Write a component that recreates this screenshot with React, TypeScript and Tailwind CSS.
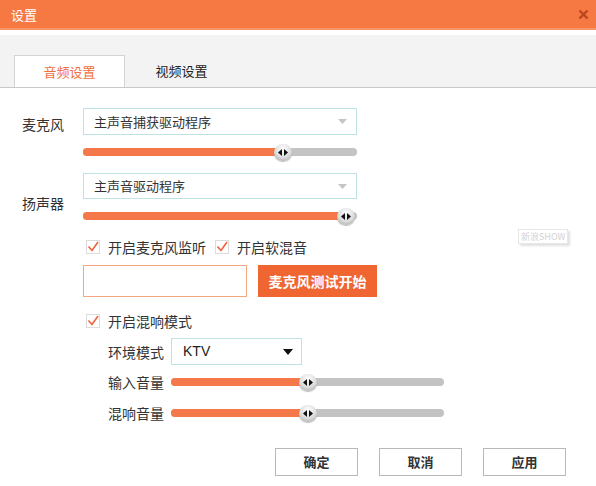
import React from "react";

const Thumb = () => (
  <div className="absolute top-[1px] w-[18px] h-[17px] -ml-[9px] rounded-full bg-[radial-gradient(circle_at_50%_30%,#ffffff,#dcdcdc_55%,#9c9c9c)] shadow-[0_1px_1px_rgba(0,0,0,0.25)] flex items-center justify-center">
    <svg width="10" height="7" viewBox="0 0 10 7">
      <polygon points="4,0 4,7 0,3.5" fill="#111" />
      <polygon points="6,0 6,7 10,3.5" fill="#111" />
    </svg>
  </div>
);

const Slider = ({ width, value }: { width: string; value: number }) => (
  <div className={`relative h-[18px] ${width}`}>
    <div className="absolute left-0 right-0 top-[5px] h-[8px] rounded-full bg-[#c3c3c3]" />
    <div
      className="absolute left-0 top-[5px] h-[8px] rounded-full bg-[#f5784a]"
      style={{ width: `${value}%` }}
    />
    <div className="absolute inset-0" style={{ left: `${value}%` }}>
      <Thumb />
    </div>
  </div>
);

const Select = ({ text, h }: { text: string; h: string }) => (
  <div className={`w-[274px] ${h} border border-[#bfe2e4] bg-white flex items-center justify-between pl-[10px] pr-[9px] text-[13px]`}>
    <span>{text}</span>
    <svg width="9" height="5" viewBox="0 0 9 5">
      <polygon points="0,0 9,0 4.5,5" fill="#c4c4c4" />
    </svg>
  </div>
);

const Check = ({ label }: { label: string }) => (
  <div className="flex items-center">
    <svg width="14" height="14" viewBox="0 0 14 14">
      <rect x="0.5" y="0.5" width="13" height="13" fill="white" stroke="#dcdcdc" />
      <polyline points="2.5,6.5 6,10.5 12,2" fill="none" stroke="#ee6540" strokeWidth="1.6" />
    </svg>
    <span className="ml-[8px] text-[14px] leading-[20px]">{label}</span>
  </div>
);

const Button = ({ label }: { label: string }) => (
  <div className="w-[83px] h-[28px] border border-[#b8b8b8] bg-white flex items-center justify-center text-[13px] font-bold text-[#333]">
    {label}
  </div>
);

export default function App() {
  return (
    <div className="relative w-[596px] h-[486px] bg-white text-[#333] overflow-hidden font-['Noto_Sans_CJK_SC',sans-serif]">
      {/* title bar */}
      <div className="h-[30px] bg-[#f67944] border-b-2 border-[#f89468] flex items-center justify-between pl-[11px] pr-[7px]">
        <span className="text-white text-[13px] leading-none">设置</span>
        <svg width="11" height="11" viewBox="0 0 11 11">
          <path d="M1.5 1.5 L9.5 9.5 M9.5 1.5 L1.5 9.5" stroke="#b9461c" strokeWidth="2.4" />
        </svg>
      </div>

      {/* tabs */}
      <div className="mt-[5px] h-[53px] bg-[#f3f3f3] border-b border-[#c9c9c9] pt-[20px] flex">
        <div className="ml-[14px] w-[111px] h-[32px] bg-white border border-b-0 border-[#d3d3d3] flex items-center justify-center text-[13px] text-[#f0703d]">
          音频设置
        </div>
        <div className="w-[113px] h-[32px] flex items-center justify-center text-[13px] text-[#222]">
          视频设置
        </div>
      </div>

      {/* microphone */}
      <div className="mt-[20px] flex">
        <div className="w-[83px] pl-[22px] pt-[6px] text-[14px] leading-[20px]">麦克风</div>
        <div className="flex flex-col">
          <Select text="主声音捕获驱动程序" h="h-[27px]" />
          <div className="mt-[8px]">
            <Slider width="w-[274px]" value={73} />
          </div>
        </div>
      </div>

      {/* speaker */}
      <div className="mt-[12px] flex">
        <div className="w-[83px] pl-[22px] pt-[20px] text-[14px] leading-[20px]">扬声器</div>
        <div className="flex flex-col">
          <Select text="主声音驱动程序" h="h-[26px]" />
          <div className="mt-[8px]">
            <Slider width="w-[274px]" value={96} />
          </div>
        </div>
      </div>

      {/* checkboxes */}
      <div className="mt-[12px] h-[20px] pl-[86px] flex items-center gap-[9px]">
        <Check label="开启麦克风监听" />
        <Check label="开启软混音" />
      </div>

      {/* mic test */}
      <div className="mt-[8px] pl-[83px] flex">
        <div className="w-[164px] h-[32px] border border-[#f5a682] bg-white" />
        <div className="ml-[11px] w-[119px] h-[32px] bg-[#ef6632] flex items-center justify-center text-white text-[14px] font-bold">
          麦克风测试开始
        </div>
      </div>

      {/* reverb */}
      <div className="mt-[14px] h-[20px] pl-[86px] flex items-center">
        <Check label="开启混响模式" />
      </div>

      <div className="mt-[7px] pl-[108px] flex items-center">
        <span className="w-[63px] text-[14px] leading-[20px]">环境模式</span>
        <div className="w-[131px] h-[27px] border border-[#bfe2e4] bg-white flex items-center justify-between pl-[11px] pr-[8px]">
          <span className="text-[14px] font-['Liberation_Sans',sans-serif] text-[#222]">KTV</span>
          <svg width="10" height="6" viewBox="0 0 10 6">
            <polygon points="0,0 10,0 5,6" fill="#111" />
          </svg>
        </div>
      </div>

      <div className="mt-[7px] pl-[108px] flex items-center">
        <span className="w-[63px] text-[14px] leading-[20px]">输入音量</span>
        <Slider width="w-[273px]" value={50} />
      </div>

      <div className="mt-[11px] pl-[108px] flex items-center">
        <span className="w-[63px] text-[14px] leading-[20px]">混响音量</span>
        <Slider width="w-[273px]" value={50} />
      </div>

      {/* footer buttons */}
      <div className="mt-[25px] pl-[275px] flex gap-[21px]">
        <Button label="确定" />
        <Button label="取消" />
        <Button label="应用" />
      </div>

      {/* watermark */}
      <div className="absolute left-[518px] top-[229px] h-[15px] px-[2px] border border-[#e6e6e6] shadow-[2px_2px_2px_rgba(0,0,0,0.12)] text-[9px] leading-[13px] text-[#d2d2d2]">
        新浪SHOW
      </div>
    </div>
  );
}
